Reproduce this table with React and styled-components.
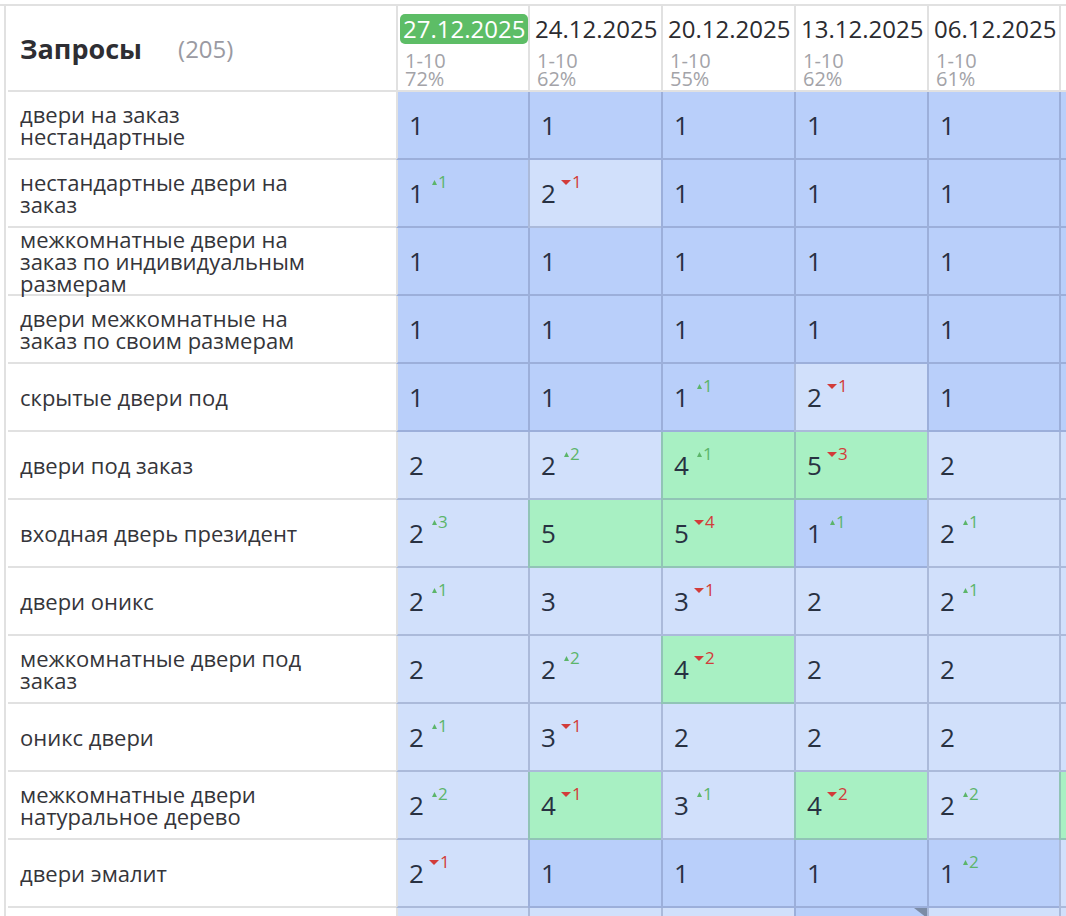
import React from 'react';
import styled, { createGlobalStyle } from 'styled-components';

const GlobalStyle = createGlobalStyle`
    html, body {
        margin: 0;
        padding: 0;
        background: #ffffff;
        overflow: hidden;
    }
    body {
        font-family: 'Open Sans', 'DejaVu Sans', sans-serif;
        color: #333333;
    }
`;

const dates = [
    { date: '27.12.2025', range: '1-10', pct: '72%', active: true },
    { date: '24.12.2025', range: '1-10', pct: '62%' },
    { date: '20.12.2025', range: '1-10', pct: '55%' },
    { date: '13.12.2025', range: '1-10', pct: '62%' },
    { date: '06.12.2025', range: '1-10', pct: '61%' },
    { date: '29.11.2025', range: '1-10', pct: '60%' },
];

// [позиция, изменение, отметка]
const rows = [
    { name: 'двери на заказ нестандартные', cells: [[1], [1], [1], [1], [1], [1]] },
    { name: 'нестандартные двери на заказ', cells: [[1, 1], [2, -1], [1], [1], [1], [1]] },
    { name: 'межкомнатные двери на заказ по индивидуальным размерам', cells: [[1], [1], [1], [1], [1], [1]] },
    { name: 'двери межкомнатные на заказ по своим размерам', cells: [[1], [1], [1], [1], [1], [1]] },
    { name: 'скрытые двери под', cells: [[1], [1], [1, 1], [2, -1], [1], [1]] },
    { name: 'двери под заказ', cells: [[2], [2, 2], [4, 1], [5, -3], [2], [2]] },
    { name: 'входная дверь президент', cells: [[2, 3], [5], [5, -4], [1, 1], [2, 1], [2]] },
    { name: 'двери оникс', cells: [[2, 1], [3], [3, -1], [2], [2, 1], [2]] },
    { name: 'межкомнатные двери под заказ', cells: [[2], [2, 2], [4, -2], [2], [2], [2]] },
    { name: 'оникс двери', cells: [[2, 1], [3, -1], [2], [2], [2], [2]] },
    { name: 'межкомнатные двери натуральное дерево', cells: [[2, 2], [4, -1], [3, 1], [4, -2], [2, 2], [4]] },
    { name: 'двери эмалит', cells: [[2, -1], [1], [1], [1], [1, 2], [2]] },
    { name: 'двери на заказ москва', cells: [[2], [2], [2], [1, 0, true], [2], [2]] },
];

const cellColor = (pos) => {
    if (pos === 1) return '#b9cffa';
    if (pos <= 3) return '#d1e0fb';
    return '#a8f0c3';
};

const Frame = styled.div`
    margin-top: 4px;
    border-top: 2px solid #e1e1e1;
    width: 1066px;
    overflow: hidden;
`;

const Table = styled.div`
    margin-left: 4px;
    border-left: 2px solid #e1e1e1;
    display: grid;
    grid-template-columns: 390px 132px 133px 133px 133px 132px 133px;
    width: max-content;
`;

const HeadName = styled.div`
    height: 86px;
    box-sizing: border-box;
    margin-left: 2px;
    border-bottom: 2px solid #e1e1e1;
    display: flex;
    align-items: center;
    padding-left: 12px;
`;

const Title = styled.span`
    font-size: 27px;
    font-weight: 700;
    color: #2e2e33;
`;

const Count = styled.span`
    margin-left: 36px;
    font-size: 24px;
    color: #9a9aa2;
`;

const HeadDate = styled.div`
    height: 86px;
    box-sizing: border-box;
    border-left: 2px solid #e1e1e1;
    border-bottom: 2px solid #e1e1e1;
    padding: 8px 0 0 2px;
    white-space: nowrap;
`;

const DateLabel = styled.span`
    display: inline-block;
    padding: 0 3px;
    font-size: 24px;
    line-height: 30px;
    border-radius: 5px;
    color: ${(p) => (p.$active ? '#ffffff' : '#2b2b30')};
    background: ${(p) => (p.$active ? '#5dbd66' : 'transparent')};
`;

const Sub = styled.div`
    margin-top: 8px;
    padding-left: 5px;
    font-size: 20px;
    line-height: 18px;
    color: #a3a3a8;
`;

const NameCell = styled.div`
    height: 68px;
    box-sizing: border-box;
    margin-left: 2px;
    border-bottom: 2px solid #e1e1e1;
    display: flex;
    align-items: center;
    padding: 0 60px 0 12px;
    font-size: 22px;
    line-height: 22px;
    color: #35353a;
`;

const Cell = styled.div`
    position: relative;
    height: 68px;
    box-sizing: border-box;
    background: ${(p) => p.$bg};
    border-left: 2px solid ${(p) => (p.$first ? '#e1e1e1' : 'rgba(105, 120, 160, 0.36)')};
    border-bottom: 2px solid rgba(105, 120, 160, 0.36);
    display: flex;
    align-items: center;
    padding-left: 11px;
    white-space: nowrap;
`;

const Num = styled.span`
    font-size: 26px;
    color: #283142;
`;

const Delta = styled.span`
    display: inline-flex;
    align-items: center;
    align-self: flex-start;
    margin-top: 11px;
    margin-left: ${(p) => (p.$up ? '8px' : '5px')};
    font-size: 17px;
    line-height: 22px;
    color: ${(p) => (p.$up ? '#5cb56a' : '#d23c3a')};
`;

const Arrow = styled.svg`
    display: block;
    margin-right: 1px;
    margin-top: 1px;
`;

const Corner = styled.span`
    position: absolute;
    top: 0;
    right: 0;
    width: 0;
    height: 0;
    border-top: 10px solid #7c8ca6;
    border-left: 13px solid transparent;
`;

const Change = ({ value }) => {
    const up = value > 0;
    return (
        <Delta $up={up}>
            {up ? (
                <Arrow width="5" height="5" viewBox="0 0 5 5">
                    <polygon points="2.5,0 5,5 0,5" fill="currentColor" />
                </Arrow>
            ) : (
                <Arrow width="10" height="5" viewBox="0 0 10 5">
                    <polygon points="0,0 10,0 5,5" fill="currentColor" />
                </Arrow>
            )}
            {Math.abs(value)}
        </Delta>
    );
};

const App = () => {
    return (
        <>
            <GlobalStyle />
            <Frame>
                <Table>
                    <HeadName>
                        <Title>Запросы</Title>
                        <Count>(205)</Count>
                    </HeadName>
                    {dates.map((d) => (
                        <HeadDate key={d.date}>
                            <DateLabel $active={d.active}>{d.date}</DateLabel>
                            <Sub>
                                {d.range}
                                <br />
                                {d.pct}
                            </Sub>
                        </HeadDate>
                    ))}
                    {rows.map((row) => (
                        <React.Fragment key={row.name}>
                            <NameCell>{row.name}</NameCell>
                            {row.cells.map(([pos, delta, mark], i) => (
                                <Cell key={i} $bg={cellColor(pos)} $first={i === 0}>
                                    <Num>{pos}</Num>
                                    {delta ? <Change value={delta} /> : null}
                                    {mark ? <Corner /> : null}
                                </Cell>
                            ))}
                        </React.Fragment>
                    ))}
                </Table>
            </Frame>
        </>
    );
};

export default App;
